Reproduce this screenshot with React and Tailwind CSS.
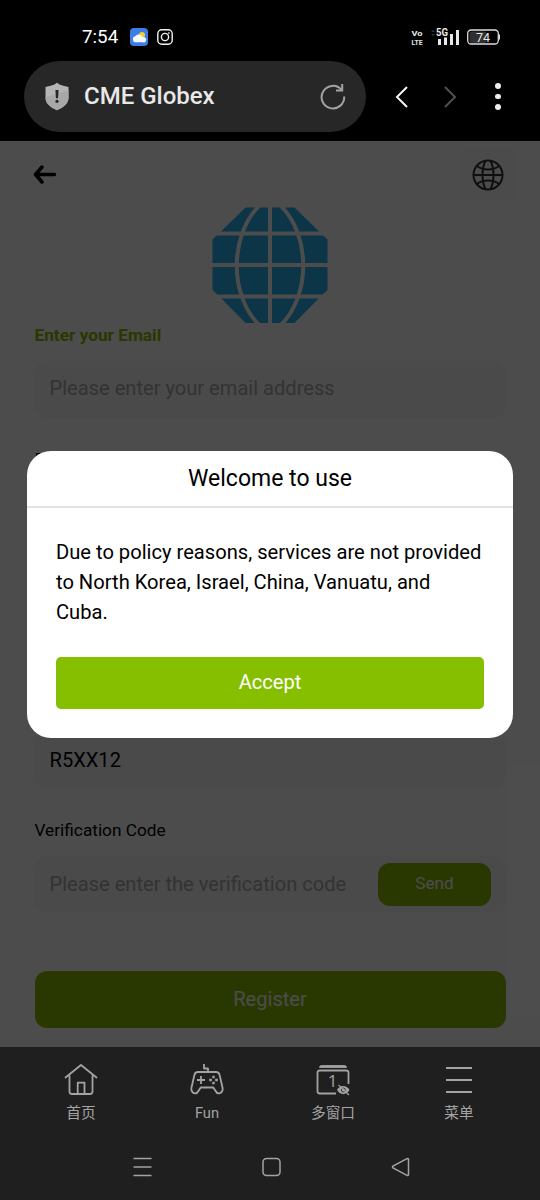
import { clsx } from 'clsx';

const StatusBar = () => (
  <div className="flex h-[61px] items-start justify-between pl-[82px] pr-10 pt-[25px] text-white">
    <div className="flex items-center">
      <span className="w-[48px] whitespace-nowrap pt-px text-[18.8px] leading-[23px]">7:54</span>
      <svg className="block" width="18" height="18" viewBox="0 0 18 18">
        <rect width="18" height="18" rx="4" fill="#3c7de8" />
        <circle cx="12" cy="7" r="3" fill="#f7cd2e" />
        <path d="M5.600 14.300a3.100 3.100 0 0 1-.4-6.100 4.100 4.100 0 0 1 7.200 1.100 2.700 2.700 0 1 1 .3 5z" fill="#f7f9ff" />
      </svg>
      <svg className="ml-[9px]" width="16" height="16" viewBox="0 0 16 16" fill="none" stroke="#f4f4f4" strokeWidth="1.400">
        <rect x=".8" y=".8" width="14.400" height="14.400" rx="4" />
        <circle cx="8" cy="8" r="3.600" />
        <circle cx="11.900" cy="4" r=".5" fill="#f4f4f4" strokeWidth=".7" />
      </svg>
    </div>
    <div className="flex h-[23px] items-center">
      <svg className="mr-[7px]" width="13" height="20" viewBox="0 0 13 20" fill="#e8e8e8" fontSize="8" fontWeight="700">
        <text x=".5" y="9" textLength="11" lengthAdjust="spacingAndGlyphs">Vo</text>
        <text x=".5" y="17.500" textLength="11" lengthAdjust="spacingAndGlyphs">LTE</text>
      </svg>
      <svg width="69" height="20" viewBox="0 0 69 20" fill="#e8e8e8">
        <path d="M0 5l2-2 2 2zM0 7l2 2 2-2z" fill="#333" />
        <text x="5" y="8.500" fontSize="10" fontWeight="700" textLength="12" lengthAdjust="spacingAndGlyphs">5G</text>
        <path d="M7 12h3v6H7zM13 10.500h3v7.500h-3zM19 7h3v11h-3zM25 3h3v15h-3z" />
        <rect x="38.500" y="4.500" width="17" height="11.500" rx="2.500" fill="#303030" />
        <rect x="36.700" y="3" width="30.600" height="14" rx="3.500" fill="none" stroke="#ddd" strokeWidth="1.300" />
        <text x="52" y="14.500" fontSize="12.500" textAnchor="middle">74</text>
        <rect x="68" y="7.500" width="1" height="5" fill="#ddd" />
      </svg>
    </div>
  </div>
);

const BrowserBar = () => (
  <div className="flex h-20 items-start pl-6">
    <div className="flex h-[71px] w-[342px] items-center rounded-full bg-[#272727] pl-5">
      <svg width="26" height="29" viewBox="0 0 26 29">
        <path d="M13 .8c3.300 2.600 7.300 3.500 11.500 4.200v10.500c0 6-5 10-11.500 12.700C6.500 25.500 1.500 21.500 1.500 15.500V5C5.700 4.300 9.700 3.400 13 .8z" fill="#b5b5b5" />
        <path d="M13 28.200C6.500 25.500 1.500 21.500 1.500 15.500L24.500 8v7.500c0 6-5 10-11.500 12.700z" fill="#a8a8a8" />
        <path d="M11.400 8h3.200l-.6 8.300h-2z" fill="#262626" />
        <circle cx="13" cy="19.300" r="1.600" fill="#262626" />
      </svg>
      <span className="ml-[14px] grow whitespace-nowrap pb-px text-[24px] font-medium leading-8 text-[#e8e8e8]">CME Globex</span>
      <svg className="mr-5" width="26" height="28" viewBox="0 0 26 28" fill="none" stroke="#a3a3a3" strokeWidth="2">
        <path d="M24.200 13.500A11.300 11.300 0 1 1 21.500 6.800" />
        <path d="M22.200 1v6.600H16" />
      </svg>
    </div>
    <svg className="mt-6" width="150" height="24" viewBox="0 0 150 24" fill="none" strokeWidth="2">
      <path d="M41 2 31 12l10 10" stroke="#f5f5f5" />
      <path d="M79 2l10 10-10 10" stroke="#505050" />
    </svg>
    <div className="-ml-[21px] mt-[22px] flex flex-col gap-[5px]">
      <span className="h-[5.5px] w-[5.5px] rounded-full bg-[#eee]" />
      <span className="h-[5.5px] w-[5.5px] rounded-full bg-[#eee]" />
      <span className="h-[5.5px] w-[5.5px] rounded-full bg-[#eee]" />
    </div>
  </div>
);

const Logo = () => (
  <svg className="mx-auto block" width="116" height="117" viewBox="0 0 116 117">
    <path d="M33.500 .5h49L107 24.500l8.500 8v50.500l-8.500 8-24.500 25h-49L9 91l-8.500-8V32.500l8.500-8z" fill="#28b1ee" />
    <g fill="none" stroke="#fff" strokeWidth="4">
      <path d="M58 0v117M0 26.500h116M0 58h116M0 89.500h116" />
      <path d="M48-2C17 28 17 89 48 119M68-2c31 30 31 91 0 121" />
    </g>
  </svg>
);

const GlobeIcon = () => (
  <svg width="32" height="32" viewBox="0 0 32 32" fill="none" stroke="#333" strokeWidth="2">
    <circle cx="16" cy="16" r="14.500" />
    <path d="M1 16h30M13.500 1.800c-4 8-4 20.400 0 28.400M18.500 1.800c4 8 4 20.400 0 28.400M5 7c6 4.600 16 4.600 22 0M5 25c6-4.600 16-4.600 22 0" />
  </svg>
);

const Field = ({ label, active, children }) => (
  <div className="mb-[29.75px]">
    <div className={clsx('h-[22px] text-[17.25px] leading-[22px]', active ? 'font-bold text-[#83bd00]' : 'text-black')}>
      {label}
    </div>
    <div className="mt-[15px] flex h-[57px] items-center justify-between rounded-xl bg-[#f7f7f7] pl-[15px] pr-[14.5px] text-[20.1px]">
      {children}
    </div>
  </div>
);

const RegisterForm = () => (
  <div className="h-full overflow-hidden bg-white px-[34.5px]">
    <div className="-mr-[10px] flex h-[66px] items-start justify-between pt-[7px]">
      <svg className="-ml-[2px] mt-[16px]" width="24" height="20" viewBox="0 0 24 20" fill="none" stroke="#000" strokeWidth="3.500" strokeLinecap="round" strokeLinejoin="round">
        <path d="M21.500 10.500H3M9 3l-6.500 7.500L9 18" />
      </svg>
      <div className="mr-[0.5px] flex h-[54px] w-[54px] items-center justify-center rounded-lg bg-[#fafafa]">
        <GlobeIcon />
      </div>
    </div>
    <Logo />
    <Field label="Enter your Email" active>
      <span className="pb-[3px] text-[#aaaab2]">Please enter your email address</span>
    </Field>
    <Field label="Password" />
    <Field />
    <Field>
      <span className="pb-px text-black">R5XX12</span>
    </Field>
    <Field label="Verification Code">
      <span className="pb-px text-[#aaaab2]">Please enter the verification code</span>
      <button className="h-[43px] w-[113px] rounded-xl bg-[#8bbd00] pb-0.5 text-[17.2px] text-white">Send</button>
    </Field>
    <button className="mt-[57.5px] block h-[57px] w-full rounded-xl bg-[#8bbd00] text-[20.1px] text-white">Register</button>
  </div>
);

const PolicyDialog = () => (
  <div className="h-[287px] w-[486px] overflow-hidden rounded-[24px] bg-white text-black">
    <h2 className="h-[57px] border-b-2 border-[#e3e3e3] text-center text-[23px] leading-[55px]">Welcome to use</h2>
    <div className="px-[29px] pt-[29px]">
      <p className="whitespace-nowrap text-[20.15px] leading-[30.4px]">
        Due to policy reasons, services are not provided
        <br />
        to North Korea, Israel, China, Vanuatu, and
        <br />
        Cuba.
      </p>
      <button className="mt-[29.5px] block h-[52px] w-full rounded-[5px] bg-[#85bf00] pb-0.5 text-[20.1px] text-white">Accept</button>
    </div>
  </div>
);

const HomeIcon = () => (
  <svg width="34" height="34" viewBox="0 0 34 34" fill="none" stroke="#a3a3a3" strokeWidth="1.800" strokeLinejoin="round" strokeLinecap="round">
    <path d="M1.500 14.500 17 2l15.500 12.500M5.500 13v15.500q0 2.500 2.500 2.500h18q2.500 0 2.500-2.500V13" />
    <path d="M13.700 31V19.700h6.800V31" />
  </svg>
);

const GamepadIcon = () => (
  <svg width="34" height="34" viewBox="0 0 34 34" fill="none" stroke="#a3a3a3" strokeWidth="1.800" strokeLinejoin="round">
    <path d="M14 1v4.500h4V9" />
    <path d="M8 9h18q3 0 3.600 3l3 13c.6 5.500-5 7-7 3l-2.300-3.500H10.700L8.400 28c-2 4-7.600 2.500-7-3l3-13Q5 9 8 9z" />
    <path d="M7 17h8M11 13v8" />
    <path d="M23.500 12.700v2.600M23.500 18.700v2.600M19.200 17h2.600M25.200 17h2.600" strokeWidth="2.400" />
  </svg>
);

const WindowsIcon = () => (
  <svg width="34" height="34" viewBox="0 0 34 34" fill="none" stroke="#a3a3a3" strokeWidth="1.800">
    <path d="M3.500 4.500q0-2 2-2h23q2 0 2 2z" fill="#a3a3a3" strokeWidth=".8" />
    <path d="M20 30.500H4q-2.500 0-2.500-2V9.500Q1.500 7.500 4 7.500h26q2.500 0 2.500 2V21" />
    <text x="16.500" y="24" fontSize="17" fontFamily="Open Sans, sans-serif" textAnchor="middle" fill="#a3a3a3" stroke="none">1</text>
    <path d="M21 27c3-5.500 9.500-5.500 12.500 0-3 5.500-9.500 5.500-12.500 0z" fill="#a3a3a3" stroke="none" />
    <circle cx="27.300" cy="27" r="2" stroke="#1f1f1f" strokeWidth=".8" />
    <path d="M22.500 22 33 32" strokeWidth="1.200" />
  </svg>
);

const MenuIcon = () => (
  <svg width="34" height="34" viewBox="0 0 34 34" stroke="#a3a3a3" strokeWidth="2">
    <path d="M4 5h26M4 17h26M4 29h26" />
  </svg>
);

const navItems = [
  { label: '首页', Icon: HomeIcon },
  { label: 'Fun', Icon: GamepadIcon },
  { label: '多窗口', Icon: WindowsIcon },
  { label: '菜单', Icon: MenuIcon },
];

const BottomNav = () => (
  <div className="h-[153px] bg-[#1f1f1f] text-[#a3a3a3]">
    <div className="grid h-[86px] grid-cols-4 px-[18px] pt-4">
      {navItems.map(({ label, Icon }) => (
        <div key={label} className="flex flex-col items-center">
          <Icon />
          <span className="mt-1.5 text-[14.7px] leading-5">{label}</span>
        </div>
      ))}
    </div>
    <svg className="mx-auto block" width="280" height="67" viewBox="0 0 280 67" fill="none" stroke="#a3a3a3" strokeWidth="1.500">
      <path d="M3.500 25.500h18M3.500 34h18M3.500 42.500h18" />
      <rect x="133" y="25.500" width="17" height="17" rx="3.500" />
      <path d="M278.500 26.500v15q0 1.500-1.500.8L263 35q-1-1 0-2l14-7.300q1.500-.7 1.500.8z" />
    </svg>
  </div>
);

export default function App() {
  return (
    <div className="h-[1200px] w-[540px] overflow-hidden bg-black font-['Roboto','Noto_Sans_CJK_SC',sans-serif]">
      <StatusBar />
      <BrowserBar />
      <div className="relative h-[906px]">
        <RegisterForm />
        <div className="absolute inset-0 flex items-center justify-center bg-black/70">
          <PolicyDialog />
        </div>
      </div>
      <BottomNav />
    </div>
  );
}
